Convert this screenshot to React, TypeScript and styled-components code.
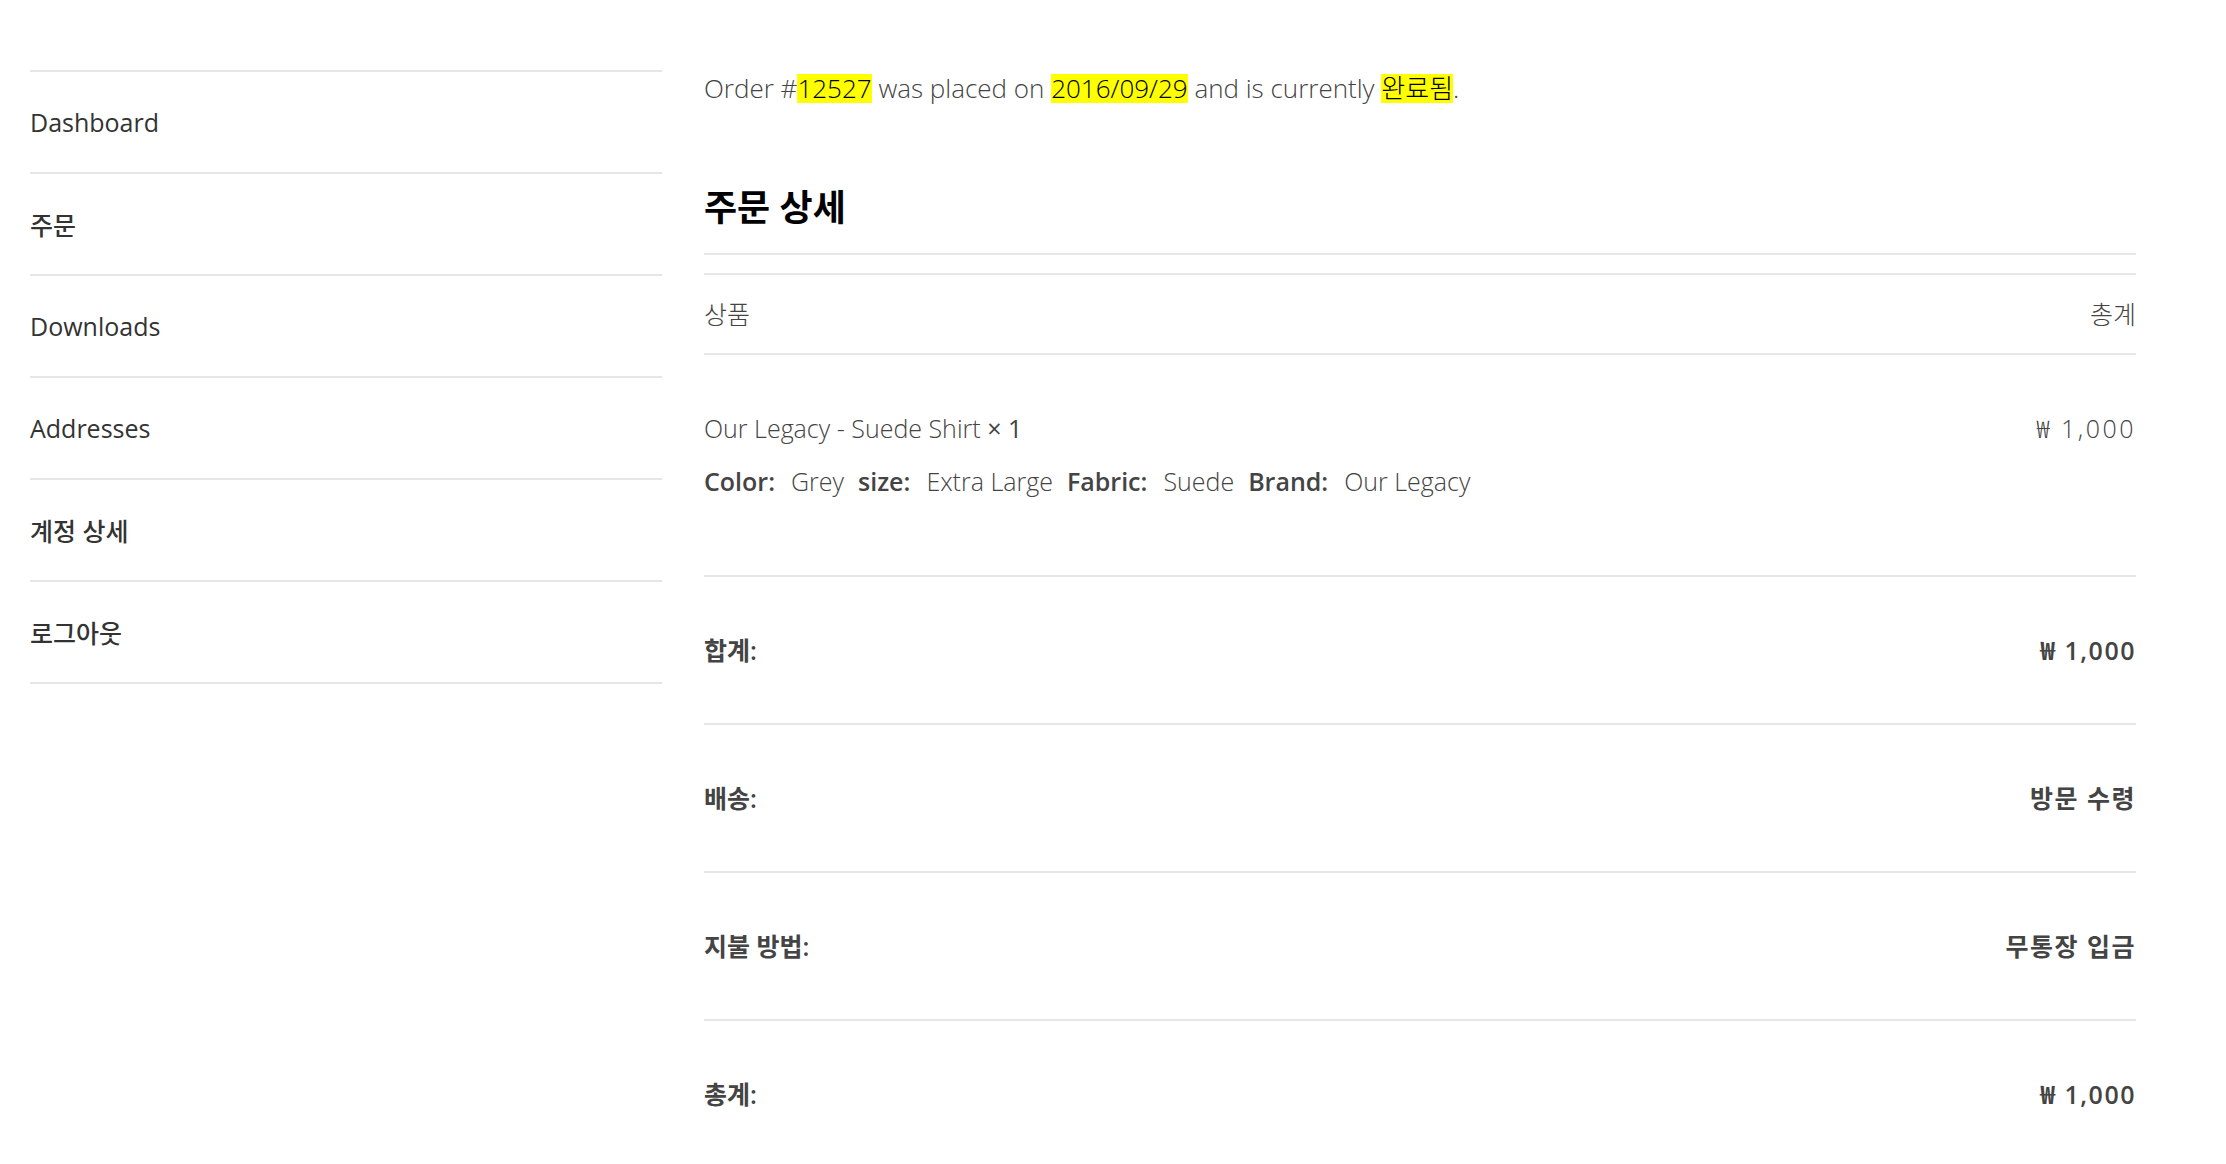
import styled, { createGlobalStyle } from "styled-components";

const GlobalStyle = createGlobalStyle`
  html, body {
    margin: 0;
    padding: 0;
    background: #ffffff;
  }

  body {
    font-family: "Open Sans", "Noto Sans CJK KR", sans-serif;
    color: #444444;
  }
`;

const navItems = ["Dashboard", "주문", "Downloads", "Addresses", "계정 상세", "로그아웃"];

const meta = [
  { label: "Color", value: "Grey" },
  { label: "size", value: "Extra Large" },
  { label: "Fabric", value: "Suede" },
  { label: "Brand", value: "Our Legacy" },
];

const totals = [
  { label: "합계:", value: "₩ 1,000" },
  { label: "배송:", value: "방문 수령" },
  { label: "지불 방법:", value: "무통장 입금" },
  { label: "총계:", value: "₩ 1,000" },
];

const App = () => {
  return (
    <>
      <GlobalStyle />
      <Page>
        <Nav>
          {navItems.map((item) => (
            <NavItem key={item}>
              <NavLink>{item}</NavLink>
            </NavItem>
          ))}
        </Nav>

        <Content>
          <Notice>
            Order #<Mark>12527</Mark> was placed on <Mark>2016/09/29</Mark> and is currently{" "}
            <Mark>완료됨</Mark>.
          </Notice>

          <Heading>주문 상세</Heading>

          <OrderTable>
            <thead>
              <tr>
                <HeadCell>상품</HeadCell>
                <HeadCell align="right">총계</HeadCell>
              </tr>
            </thead>
            <tbody>
              <tr>
                <ItemCell>
                  <ProductName>
                    Our Legacy - Suede Shirt <Qty>× 1</Qty>
                  </ProductName>
                  <MetaList>
                    {meta.map((m) => (
                      <MetaItem key={m.label}>
                        <MetaLabel>{m.label}:</MetaLabel>
                        <MetaValue>{m.value}</MetaValue>
                      </MetaItem>
                    ))}
                  </MetaList>
                </ItemCell>
                <ItemCell align="right">
                  <Price>₩ 1,000</Price>
                </ItemCell>
              </tr>
            </tbody>
            <tfoot>
              {totals.map((t) => (
                <tr key={t.label}>
                  <TotalCell as="th">{t.label}</TotalCell>
                  <TotalCell align="right">
                    <TotalValue>{t.value}</TotalValue>
                  </TotalCell>
                </tr>
              ))}
            </tfoot>
          </OrderTable>
        </Content>
      </Page>
    </>
  );
};

export default App;

const Page = styled.div`
  display: flex;
  align-items: flex-start;
  gap: 42px;
  padding: 0 90px 0 30px;
`;

const Nav = styled.ul`
  list-style: none;
  margin: 70px 0 0;
  padding: 0;
  width: 632px;
  flex-shrink: 0;
  border-bottom: 2px solid #e6e6e6;
`;

const NavItem = styled.li`
  display: flex;
  align-items: center;
  height: 100px;
  border-top: 2px solid #e6e6e6;
`;

const NavLink = styled.a`
  font-size: 25px;
  font-weight: 500;
  color: #333333;
  text-decoration: none;
  cursor: pointer;
`;

const Content = styled.main`
  flex: 1;
  min-width: 0;
  padding-top: 74px;
`;

const Notice = styled.p`
  margin: 0;
  font-size: 26px;
  font-weight: 300;
  line-height: 29px;
  color: #444444;
`;

const Mark = styled.mark`
  display: inline-block;
  background: #ffff00;
  color: #000000;
  line-height: 29px;
`;

const Heading = styled.h2`
  margin: 85px 0 0;
  padding-bottom: 25px;
  font-size: 36px;
  font-weight: 700;
  line-height: 40px;
  color: #000000;
  border-bottom: 2px solid #e6e6e6;
`;

const OrderTable = styled.table`
  width: 100%;
  margin-top: 18px;
  border-collapse: separate;
  border-spacing: 0;
  border-top: 2px solid #e6e6e6;
`;

const HeadCell = styled.th<{ align?: string }>`
  padding: 24px 0;
  font-size: 25px;
  font-weight: 300;
  line-height: 30px;
  color: #444444;
  text-align: ${(p) => p.align || "left"};
  border-bottom: 2px solid #e6e6e6;
`;

const ItemCell = styled.td<{ align?: string }>`
  padding: 55px 0 76px;
  vertical-align: top;
  text-align: ${(p) => p.align || "left"};
  border-bottom: 2px solid #e6e6e6;
`;

const ProductName = styled.div`
  font-size: 25px;
  font-weight: 300;
  line-height: 36px;
  color: #444444;
`;

const Qty = styled.strong`
  font-weight: 500;
`;

const MetaList = styled.ul`
  display: flex;
  list-style: none;
  margin: 17px 0 0;
  padding: 0;
  font-size: 25px;
  line-height: 36px;
`;

const MetaItem = styled.li`
  display: flex;
  gap: 16px;
  margin-right: 14px;
`;

const MetaLabel = styled.strong`
  font-weight: 600;
  color: #444444;
`;

const MetaValue = styled.span`
  font-weight: 300;
  color: #444444;
`;

const Price = styled.span`
  font-size: 25px;
  font-weight: 300;
  line-height: 36px;
  letter-spacing: 2.5px;
  color: #444444;
`;

const TotalCell = styled.td<{ align?: string }>`
  padding: 58px 0;
  font-size: 25px;
  font-weight: 600;
  line-height: 30px;
  color: #444444;
  text-align: ${(p) => p.align || "left"};
  border-bottom: 2px solid #e6e6e6;

  tr:last-child > & {
    border-bottom: none;
  }
`;

const TotalValue = styled.span`
  letter-spacing: 1.5px;
`;
